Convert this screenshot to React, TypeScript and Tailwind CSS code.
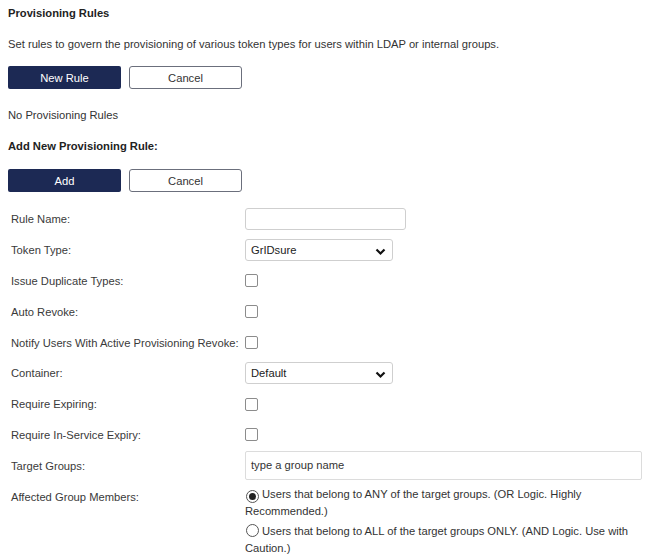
import React from 'react';

const Chevron: React.FC = () => (
  <svg width="11" height="8" viewBox="0 0 11 8" className="absolute right-[6px] top-[8px]">
    <path d="M1.5 1.5 L5.5 5.5 L9.5 1.5" fill="none" stroke="#111" strokeWidth="2.2" />
  </svg>
);

const Check: React.FC = () => (
  <span className="block w-[13px] h-[13px] border border-[#8c8c8c] rounded-[2px] bg-white" />
);

const Row: React.FC<{ label: string; children: React.ReactNode }> = ({ label, children }) => (
  <div className="grid grid-cols-[234px_1fr] items-center h-[30.8px]">
    <div className="text-[#3a3a3a] whitespace-nowrap">{label}</div>
    <div className="flex items-center">{children}</div>
  </div>
);

const Select: React.FC<{ value: string }> = ({ value }) => (
  <div className="relative w-[148px] h-[22px] border border-[#cfcfcf] rounded-[3px] bg-white pl-[5px] leading-[20px] text-[#222]">
    {value}
    <Chevron />
  </div>
);

const App: React.FC = () => {
  return (
    <div className="w-[652px] h-[560px] bg-white overflow-hidden pl-[8px] pr-[10px] pt-[5px] text-[11.2px] leading-[16px] text-[#333] font-['Liberation_Sans',Arial,sans-serif]">
      <div className="font-bold text-[#222]">Provisioning Rules</div>
      <p className="mt-[15px]">Set rules to govern the provisioning of various token types for users within LDAP or internal groups.</p>

      <div className="flex gap-[8px] mt-[14px]">
        <button className="w-[113px] h-[23px] rounded-[2px] bg-[#1c2954] text-white">New Rule</button>
        <button className="w-[113px] h-[23px] rounded-[3px] border border-[#6b6f7c] bg-white text-[#333]">Cancel</button>
      </div>

      <p className="mt-[18px]">No Provisioning Rules</p>
      <div className="mt-[15px] font-bold text-[#222]">Add New Provisioning Rule:</div>

      <div className="flex gap-[8px] mt-[15px]">
        <button className="w-[113px] h-[23px] rounded-[2px] bg-[#1c2954] text-white">Add</button>
        <button className="w-[113px] h-[23px] rounded-[3px] border border-[#6b6f7c] bg-white text-[#333]">Cancel</button>
      </div>

      <div className="mt-[12px] pl-[3px]">
        <Row label="Rule Name:">
          <div className="w-[161px] h-[22px] border border-[#cfcfcf] rounded-[3px] bg-white" />
        </Row>
        <Row label="Token Type:">
          <Select value="GrIDsure" />
        </Row>
        <Row label="Issue Duplicate Types:">
          <Check />
        </Row>
        <Row label="Auto Revoke:">
          <Check />
        </Row>
        <Row label="Notify Users With Active Provisioning Revoke:">
          <Check />
        </Row>
        <Row label="Container:">
          <Select value="Default" />
        </Row>
        <Row label="Require Expiring:">
          <Check />
        </Row>
        <Row label="Require In-Service Expiry:">
          <Check />
        </Row>
        <Row label="Target Groups:">
          <div className="w-full h-[29px] border border-[#dcdcdc] rounded-[2px] bg-white pl-[5px] leading-[27px] text-[#333]">
            type a group name
          </div>
        </Row>
        <div className="grid grid-cols-[234px_1fr] pt-[5px]">
          <div className="text-[#3a3a3a] mt-[3px]">Affected Group Members:</div>
          <div className="flex flex-col gap-[3px] leading-[17px]">
            <div>
              <span className="inline-flex align-[-2px] mr-[3px] ml-[1px] w-[13px] h-[13px] rounded-full border border-[#555] items-center justify-center bg-white">
                <span className="w-[7px] h-[7px] rounded-full bg-[#222]" />
              </span>
              Users that belong to ANY of the target groups. (OR Logic. Highly Recommended.)
            </div>
            <div>
              <span className="inline-block align-[-2px] mr-[3px] ml-[1px] w-[13px] h-[13px] rounded-full border border-[#555] bg-white" />
              Users that belong to ALL of the target groups ONLY. (AND Logic. Use with Caution.)
            </div>
          </div>
        </div>
      </div>
    </div>
  );
};

export default App;
